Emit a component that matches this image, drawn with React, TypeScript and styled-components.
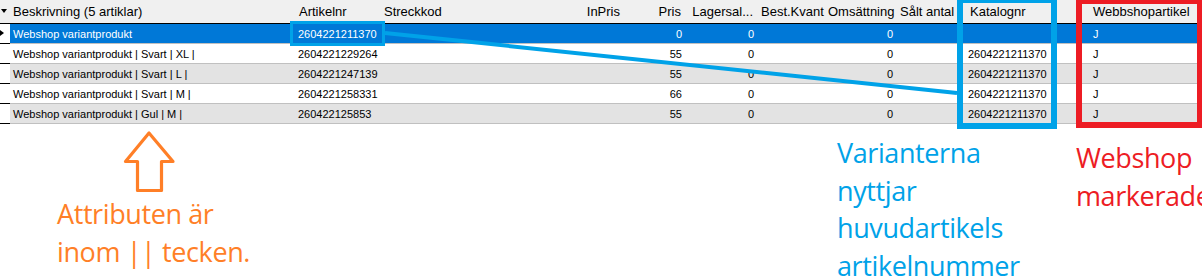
import React from "react";
import styled, { createGlobalStyle } from "styled-components";

const GlobalStyle = createGlobalStyle`
  html, body { margin: 0; padding: 0; background: #fff; overflow: hidden; }
`;

const COLS = "10px 284px 86px 144px 100px 62px 71px 65px 78px 60px 128px 114px";

const Page = styled.div`
  position: relative;
  width: 1202px;
  height: 276px;
  overflow: hidden;
  background: #fff;
  font-family: "Liberation Sans", Arial, sans-serif;
`;

const Grid = styled.div`
  display: flex;
  flex-direction: column;
`;

const HeaderRow = styled.div`
  display: grid;
  grid-template-columns: ${COLS};
  height: 23px;
  background: #f0f0f0;
  border-bottom: 1px solid #000;
  font-size: 13px;
  color: #000;
`;

const HeaderCell = styled.div<{ $right?: boolean; $pad?: number }>`
  display: flex;
  align-items: center;
  justify-content: ${(p) => (p.$right ? "flex-end" : "flex-start")};
  padding: ${(p) => (p.$right ? `0 ${p.$pad ?? 4}px 0 0` : `0 0 0 ${p.$pad ?? 4}px`)};
  white-space: nowrap;
  overflow: visible;
`;

const Indicator = styled.div<{ $head?: boolean }>`
  position: relative;
  background: ${(p) => (p.$head ? "#f0f0f0" : "#fff")};
  border-bottom: ${(p) => (p.$head ? "none" : "1px solid #000")};
`;

const DownMark = styled.span`
  position: absolute;
  left: 1px;
  top: 9px;
  width: 0;
  height: 0;
  border-left: 3.5px solid transparent;
  border-right: 3.5px solid transparent;
  border-top: 4px solid #000;
`;

const RightMark = styled.span`
  position: absolute;
  left: 0;
  top: 6px;
  width: 0;
  height: 0;
  border-top: 3.5px solid transparent;
  border-bottom: 3.5px solid transparent;
  border-left: 4px solid #000;
`;

const Row = styled.div<{ $tone: "sel" | "white" | "gray" }>`
  display: grid;
  grid-template-columns: ${COLS};
  height: 20px;
  font-size: 11px;
  color: ${(p) => (p.$tone === "sel" ? "#fff" : "#000")};
  background: ${(p) =>
    p.$tone === "sel" ? "#0078d7" : p.$tone === "gray" ? "#e3e3e3" : "#fff"};
`;

const Cell = styled.div<{ $right?: boolean; $pad?: number }>`
  display: flex;
  align-items: center;
  justify-content: ${(p) => (p.$right ? "flex-end" : "flex-start")};
  padding: ${(p) => (p.$right ? `0 ${p.$pad ?? 4}px 0 0` : `0 0 0 ${p.$pad ?? 4}px`)};
  border-bottom: 1px solid #c0c0c0;
  white-space: nowrap;
`;

const ArtikelBox = styled.div`
  position: absolute;
  left: 290px;
  top: 21px;
  width: 95px;
  height: 25px;
  box-sizing: border-box;
  border: 3px solid #00a2e8;
`;

const CatalogBox = styled.div`
  position: absolute;
  left: 957px;
  top: -3px;
  width: 100px;
  height: 132px;
  box-sizing: border-box;
  border: 6px solid #00a2e8;
`;

const WebBox = styled.div`
  position: absolute;
  left: 1076px;
  top: -2px;
  width: 127px;
  height: 130px;
  box-sizing: border-box;
  border: 6px solid #ed1c24;
`;

const LineLayer = styled.svg`
  position: absolute;
  left: 0;
  top: 0;
  pointer-events: none;
`;

const Notes = styled.div`
  display: grid;
  grid-template-columns: 57px 780px 239px 1fr;
  align-items: start;
`;

const Note = styled.div<{ $color: string; $top: number; $col: number }>`
  grid-column: ${(p) => p.$col};
  padding-top: ${(p) => p.$top}px;
  color: ${(p) => p.$color};
  font-family: "Open Sans", "Noto Sans", sans-serif;
  font-size: 27px;
  line-height: 37.5px;
  letter-spacing: -0.4px;
  white-space: nowrap;
`;

const ArrowSvg = styled.svg`
  display: block;
  margin: 6px 0 0 65px;
`;

const NoteText = styled.div`
  margin-top: 1px;
`;

type RowData = {
  tone: "sel" | "white" | "gray";
  name: string;
  art: string;
  pris: string;
  kat: string;
};

const rows: RowData[] = [
  { tone: "sel", name: "Webshop variantprodukt", art: "2604221211370", pris: "0", kat: "" },
  { tone: "white", name: "Webshop variantprodukt | Svart | XL |", art: "2604221229264", pris: "55", kat: "2604221211370" },
  { tone: "gray", name: "Webshop variantprodukt | Svart | L |", art: "2604221247139", pris: "55", kat: "2604221211370" },
  { tone: "white", name: "Webshop variantprodukt | Svart | M |", art: "2604221258331", pris: "66", kat: "2604221211370" },
  { tone: "gray", name: "Webshop variantprodukt | Gul | M |", art: "260422125853", pris: "55", kat: "2604221211370" },
];

export default function App() {
  return (
    <Page>
      <GlobalStyle />
      <Grid>
        <HeaderRow>
          <Indicator $head>
            <DownMark />
          </Indicator>
          <HeaderCell $pad={3}>Beskrivning (5 artiklar)</HeaderCell>
          <HeaderCell $pad={5}>Artikelnr</HeaderCell>
          <HeaderCell $pad={4}>Streckkod</HeaderCell>
          <HeaderCell $right $pad={4}>InPris</HeaderCell>
          <HeaderCell $right $pad={5}>Pris</HeaderCell>
          <HeaderCell $right $pad={4}>Lagersal...</HeaderCell>
          <HeaderCell $pad={4}>Best.Kvant</HeaderCell>
          <HeaderCell $pad={6}>Omsättning</HeaderCell>
          <HeaderCell $pad={0}>Sålt antal</HeaderCell>
          <HeaderCell $pad={10}>Katalognr</HeaderCell>
          <HeaderCell $pad={5}>Webbshopartikel</HeaderCell>
        </HeaderRow>
        {rows.map((r, i) => (
          <Row key={i} $tone={r.tone}>
            <Indicator>{r.tone === "sel" && <RightMark />}</Indicator>
            <Cell $pad={3}>{r.name}</Cell>
            <Cell $pad={4}>{r.art}</Cell>
            <Cell />
            <Cell $right />
            <Cell $right $pad={4}>{r.pris}</Cell>
            <Cell $right $pad={3}>0</Cell>
            <Cell />
            <Cell $right $pad={7}>0</Cell>
            <Cell />
            <Cell $pad={8}>{r.kat}</Cell>
            <Cell $pad={5}>J</Cell>
          </Row>
        ))}
      </Grid>

      <Notes>
        <Note $col={2} $color="#ff7f27" $top={0}>
          <ArrowSvg width="56" height="64" viewBox="0 0 56 64">
            <path
              d="M27 3 L3.5 31.5 L15.5 31.5 L15.5 60.5 L39.5 60.5 L39.5 31.5 L51 31.5 Z"
              fill="none"
              stroke="#ff7f27"
              strokeWidth="3.2"
              strokeLinejoin="round"
            />
          </ArrowSvg>
          <NoteText>
            Attributen är
            <br />
            inom || tecken.
          </NoteText>
        </Note>
        <Note $col={3} $color="#00a2e8" $top={10}>
          Varianterna
          <br />
          nyttjar
          <br />
          huvudartikels
          <br />
          artikelnummer
        </Note>
        <Note $col={4} $color="#ed1c24" $top={15}>
          Webshop
          <br />
          markerade
        </Note>
      </Notes>

      <LineLayer width="1202" height="276">
        <line x1="385" y1="33" x2="957" y2="93" stroke="#00a2e8" strokeWidth="4" />
      </LineLayer>
      <ArtikelBox />
      <CatalogBox />
      <WebBox />
    </Page>
  );
}
